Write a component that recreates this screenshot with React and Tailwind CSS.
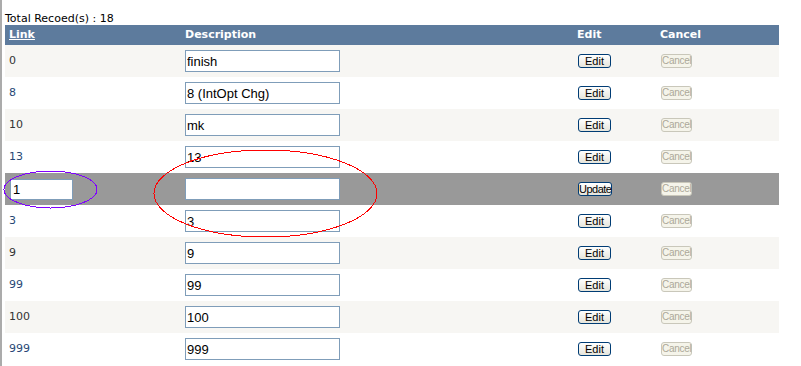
const rows = [
  { link: '0', desc: 'finish' },
  { link: '8', desc: '8 (IntOpt Chg)' },
  { link: '10', desc: 'mk' },
  { link: '13', desc: '13' },
  { link: '1', desc: '', editing: true },
  { link: '3', desc: '3' },
  { link: '9', desc: '9' },
  { link: '99', desc: '99' },
  { link: '100', desc: '100' },
  { link: '999', desc: '999' },
];

const verdana = "font-['DejaVu_Sans',Verdana,sans-serif]";
const arial = "font-['Liberation_Sans',Arial,sans-serif]";

function XpButton({ children, disabled, className = '' }) {
  if (disabled) {
    return (
      <button
        disabled
        className={`h-[14px] rounded-[3px] border border-[#c9c7ba] bg-[#f5f4ea] leading-[12px] text-[#aca899] ${arial} ${className}`}
      >
        {children}
      </button>
    );
  }
  return (
    <button
      className={`h-[14px] rounded-[3px] border border-[#003c74] bg-gradient-to-b from-white to-[#e6e5dc] text-[11px] leading-[12px] text-black ${arial} ${className}`}
    >
      {children}
    </button>
  );
}

export default function App() {
  return (
    <div className="relative min-h-[366px] w-[801px] border-l-2 border-[#ababab] bg-white pl-[3px]">
      <div className={`flex h-[25px] items-end text-[11px] leading-[13px] text-black ${verdana}`}>
        Total Recoed(s) : 18
      </div>

      <div className={`w-[774px] text-[11px] ${verdana}`}>
        <div className="flex h-[20px] items-center bg-[#5d7b9d] font-bold text-white">
          <div className="w-[176px] pl-[4px] underline">Link</div>
          <div className="w-[392px] pl-[4px]">Description</div>
          <div className="w-[83px] pl-[4px]">Edit</div>
          <div className="flex-1 pl-[4px]">Cancel</div>
        </div>

        {rows.map((r, i) => {
          const bg = r.editing ? 'bg-[#999999]' : i % 2 === 0 ? 'bg-[#f7f6f3]' : 'bg-white';
          const fg = i % 2 === 0 ? 'text-[#333333]' : 'text-[#284775]';
          return (
            <div key={i} className={`flex h-[32px] items-center ${bg} ${fg}`}>
              <div className="w-[176px] pl-[4px]">
                {r.editing ? (
                  <input
                    readOnly
                    value={r.link}
                    className={`ml-[1px] h-[21px] w-[63px] border border-[#7f9db9] bg-white px-[2px] text-[13px] text-black outline-none ${arial}`}
                  />
                ) : (
                  r.link
                )}
              </div>
              <div className="w-[392px] pl-[4px]">
                <input
                  readOnly
                  value={r.desc}
                  className={`h-[22px] w-[155px] border border-[#7f9db9] bg-white px-[1px] text-[13px] text-black outline-none ${arial}`}
                />
              </div>
              <div className="mb-[1px] flex w-[83px] pl-[5px]">
                {r.editing ? (
                  <XpButton className="w-[34px] tracking-[-0.5px]">Update</XpButton>
                ) : (
                  <XpButton className="w-[33px]">Edit</XpButton>
                )}
              </div>
              <div className="mb-[1px] flex flex-1 pl-[5px]">
                <XpButton disabled className="w-[31px] text-[10px] tracking-[-0.3px]">Cancel</XpButton>
              </div>
            </div>
          );
        })}
      </div>

      <svg
        className="pointer-events-none absolute left-[-2px] top-0"
        width="801"
        height="366"
        shapeRendering="crispEdges"
      >
        <ellipse cx="50.5" cy="189.5" rx="46.5" ry="18.5" fill="none" stroke="#8000ff" strokeWidth="1" />
        <ellipse cx="265.5" cy="193.5" rx="111.5" ry="43.5" fill="none" stroke="#ff0000" strokeWidth="1" />
      </svg>
    </div>
  );
}
